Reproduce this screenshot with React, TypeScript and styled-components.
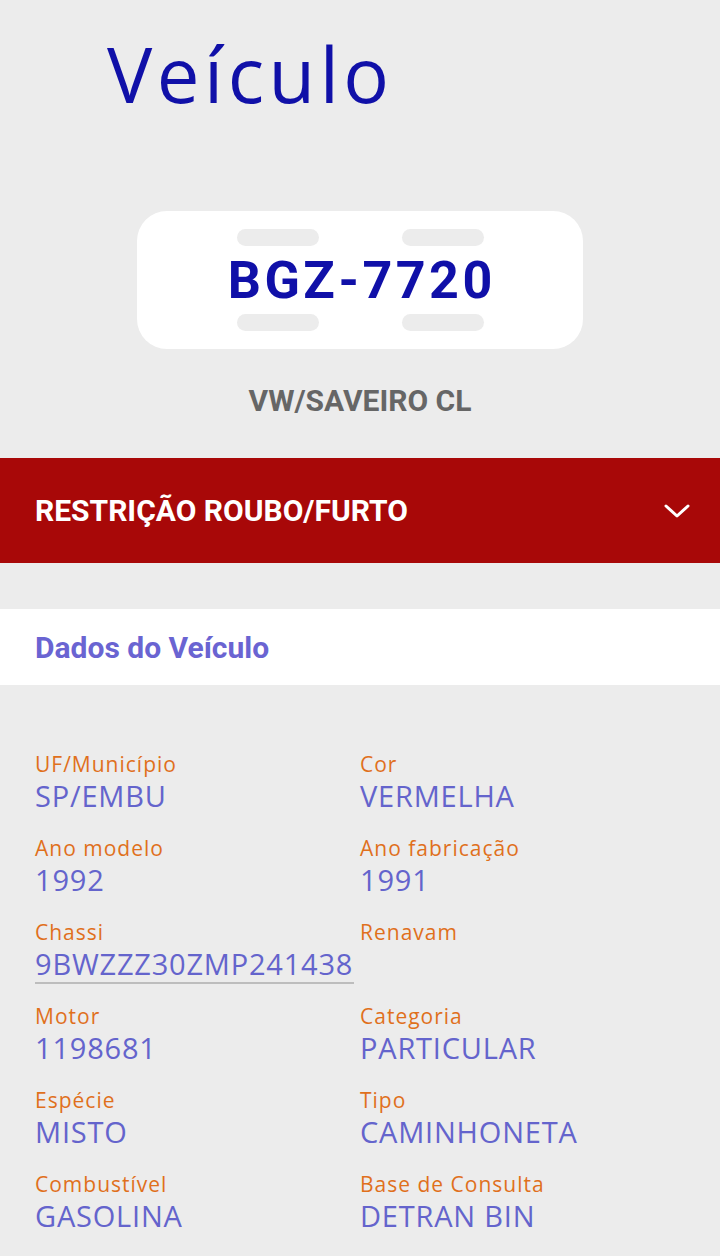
import React from "react";
import styled, { createGlobalStyle } from "styled-components";

const Global = createGlobalStyle`
  html, body { margin: 0; padding: 0; background: #ececec; }
  body { font-family: "Open Sans", sans-serif; }
`;

const Page = styled.div`
  width: 720px;
  min-height: 1256px;
  background: #ececec;
  display: flex;
  flex-direction: column;
`;

const Title = styled.h1`
  margin: 0;
  padding: 24px 0 0 107px;
  height: 150px;
  box-sizing: border-box;
  font-family: "Open Sans", sans-serif;
  font-weight: 400;
  font-size: 76px;
  line-height: 100px;
  color: #1010a8;
  letter-spacing: 4.5px;
`;

const PlateWrap = styled.div`
  display: flex;
  justify-content: center;
  padding-top: 61px;
`;

const Plate = styled.div`
  width: 446px;
  height: 138px;
  background: #fff;
  border-radius: 30px;
  box-sizing: border-box;
  padding: 18px 0;
  display: flex;
  flex-direction: column;
  justify-content: space-between;
  align-items: center;
`;

const PillRow = styled.div`
  display: flex;
  gap: 83px;
`;

const Pill = styled.div`
  width: 82px;
  height: 17px;
  border-radius: 9px;
  background: #ececec;
`;

const PlateText = styled.div`
  font-family: Roboto, sans-serif;
  font-weight: 700;
  font-size: 52px;
  line-height: 50px;
  letter-spacing: 3.5px;
  color: #1010a8;
  margin-right: -3.5px;
  margin-top: 2px;
`;

const Model = styled.div`
  text-align: center;
  font-family: Roboto, sans-serif;
  font-weight: 700;
  font-size: 30px;
  line-height: 32px;
  color: #666;
  margin-top: 36px;
`;

const Alert = styled.div`
  margin-top: 41px;
  height: 105px;
  background: #a80808;
  display: flex;
  align-items: center;
  justify-content: space-between;
  padding: 0 30px 0 35px;
  font-family: Roboto, sans-serif;
  font-weight: 700;
  font-size: 30px;
  color: #fff;
`;

const SectionHead = styled.div`
  margin-top: 46px;
  height: 76px;
  background: #fff;
  display: flex;
  align-items: center;
  padding-left: 35px;
  font-family: Roboto, sans-serif;
  font-weight: 700;
  font-size: 30px;
  color: #6a64d2;
`;

const Grid = styled.div`
  display: grid;
  grid-template-columns: 325px 1fr;
  row-gap: 17px;
  padding: 65px 0 0 35px;
`;

const Field = styled.div`
  display: flex;
  flex-direction: column;
  height: 67px;
`;

const Label = styled.div`
  font-family: "Open Sans", sans-serif;
  font-size: 21px;
  line-height: 28px;
  letter-spacing: 1px;
  color: #e0701c;
`;

const Value = styled.div<{ $underline?: boolean }>`
  font-family: "Open Sans", sans-serif;
  font-size: 29px;
  line-height: 36px;
  letter-spacing: 0.8px;
  color: #6464cc;
  align-self: flex-start;
  white-space: nowrap;
  ${(p) => (p.$underline ? "border-bottom: 2px solid #bdbdbd; width: 319px;" : "")}
`;

const fields: { label: string; value: string; underline?: boolean }[] = [
  { label: "UF/Município", value: "SP/EMBU" },
  { label: "Cor", value: "VERMELHA" },
  { label: "Ano modelo", value: "1992" },
  { label: "Ano fabricação", value: "1991" },
  { label: "Chassi", value: "9BWZZZ30ZMP241438", underline: true },
  { label: "Renavam", value: "" },
  { label: "Motor", value: "1198681" },
  { label: "Categoria", value: "PARTICULAR" },
  { label: "Espécie", value: "MISTO" },
  { label: "Tipo", value: "CAMINHONETA" },
  { label: "Combustível", value: "GASOLINA" },
  { label: "Base de Consulta", value: "DETRAN BIN" },
];

export default function App() {
  return (
    <Page>
      <Global />
      <Title>Veículo</Title>
      <PlateWrap>
        <Plate>
          <PillRow>
            <Pill />
            <Pill />
          </PillRow>
          <PlateText>BGZ-7720</PlateText>
          <PillRow>
            <Pill />
            <Pill />
          </PillRow>
        </Plate>
      </PlateWrap>
      <Model>VW/SAVEIRO CL</Model>
      <Alert>
        <span>RESTRIÇÃO ROUBO/FURTO</span>
        <svg width="26" height="16" viewBox="0 0 26 16" fill="none">
          <path d="M2 3 L13 13 L24 3" stroke="#fff" strokeWidth="3" strokeLinecap="round" strokeLinejoin="round" />
        </svg>
      </Alert>
      <SectionHead>Dados do Veículo</SectionHead>
      <Grid>
        {fields.map((f) => (
          <Field key={f.label}>
            <Label>{f.label}</Label>
            <Value $underline={f.underline}>{f.value}</Value>
          </Field>
        ))}
      </Grid>
    </Page>
  );
}
